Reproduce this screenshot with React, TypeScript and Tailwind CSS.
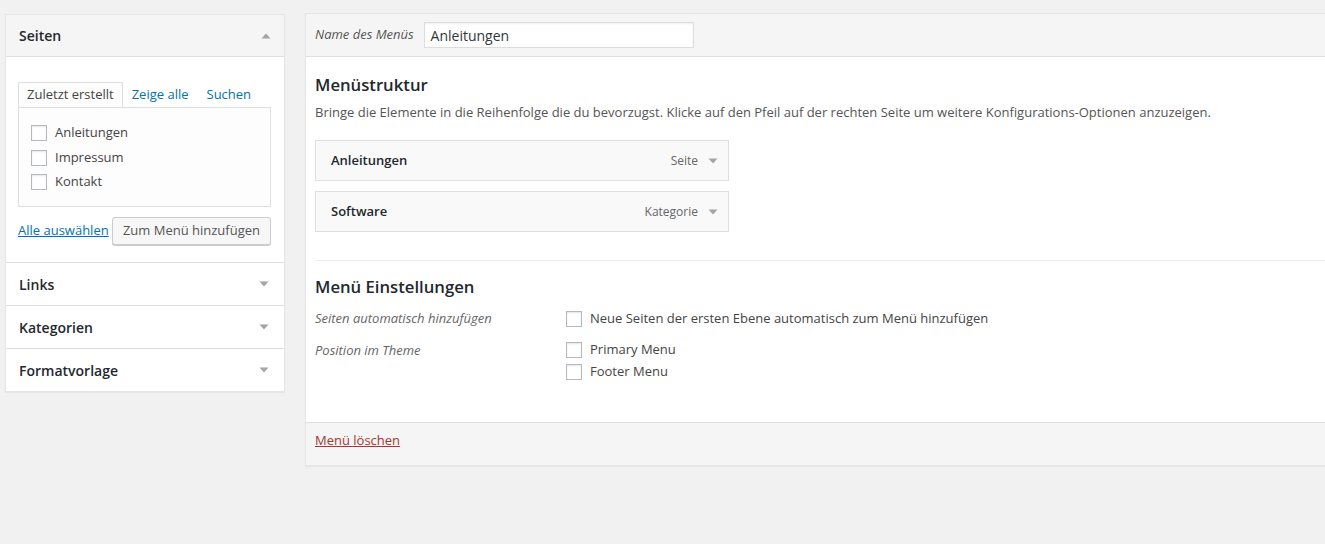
import React from "react";

const Down = () => (
  <svg width="10" height="6" viewBox="0 0 10 6" className="shrink-0">
    <path d="M0.5 0.5 L9.5 0.5 L5 5.5 Z" fill="#a0a5aa" />
  </svg>
);
const Up = () => (
  <svg width="10" height="6" viewBox="0 0 10 6" className="shrink-0">
    <path d="M0.5 5.5 L9.5 5.5 L5 0.5 Z" fill="#a0a5aa" />
  </svg>
);

const Box = () => (
  <span className="inline-block w-4 h-4 border border-[#b4b9be] bg-white shadow-[inset_0_1px_2px_rgba(0,0,0,0.1)] shrink-0" />
);

function Section({ title }: { title: string }) {
  return (
    <div className="h-[43px] border-t border-[#dfdfdf] flex items-center justify-between pl-[13px] pr-[15px] bg-white">
      <span className="text-[14px] font-semibold text-[#23282d]">{title}</span>
      <Down />
    </div>
  );
}

export default function App() {
  return (
    <div
      className="w-[1325px] h-[544px] overflow-hidden bg-[#f1f1f1] text-[13px] text-[#444]"
      style={{ fontFamily: '"Open Sans", "Noto Sans", sans-serif' }}
    >
      <div className="flex items-start pt-[13px]">
        {/* Left column */}
        <div className="ml-[5px] w-[280px] shrink-0 bg-white border border-[#e5e5e5] shadow-[0_1px_1px_rgba(0,0,0,0.04)] mt-px">
          <div className="h-[42px] bg-[#f5f5f5] border-b border-[#dfdfdf] flex items-center justify-between pl-[13px] pr-[13px]">
            <span className="text-[14px] font-semibold text-[#23282d]">Seiten</span>
            <Up />
          </div>
          <div className="pl-[12px] pr-[13px] pt-[26px] pb-[17px]">
            <div className="flex items-end h-[24px]">
              <div className="h-[25px] px-[8px] border border-[#dfdfdf] border-b-0 bg-[#fdfdfd] flex items-center text-[#444] relative z-10">
                Zuletzt erstellt
              </div>
              <span className="ml-[9px] h-[24px] flex items-center text-[#0073aa]">Zeige alle</span>
              <span className="ml-[18px] h-[24px] flex items-center text-[#0073aa]">Suchen</span>
            </div>
            <div className="h-[100px] border border-[#dfdfdf] bg-[#fdfdfd] pl-[12px] pt-[17px]">
              <div className="flex flex-col gap-[8.5px]">
                {["Anleitungen", "Impressum", "Kontakt"].map((t) => (
                  <label key={t} className="flex items-center gap-[8px] h-[16px]">
                    <Box />
                    <span>{t}</span>
                  </label>
                ))}
              </div>
            </div>
            <div className="flex items-center justify-between mt-[10px]">
              <span className="text-[#0073aa] underline">Alle auswählen</span>
              <button className="h-[28px] px-[10px] border border-[#ccc] bg-[#f7f7f7] rounded-[3px] shadow-[0_1px_0_#ccc] text-[#555] text-[13px]">
                Zum Menü hinzufügen
              </button>
            </div>
          </div>
          <Section title="Links" />
          <Section title="Kategorien" />
          <Section title="Formatvorlage" />
        </div>

        {/* Right panel */}
        <div className="ml-[20px] flex-1 bg-white border border-r-0 border-[#e5e5e5] shadow-[0_1px_1px_rgba(0,0,0,0.04)]">
          <div className="h-[43px] bg-[#f5f5f5] border-b border-[#dfdfdf] flex items-center pl-[9px]">
            <span className="italic text-[#555]">Name des Menüs</span>
            <div className="ml-[10px] w-[270px] h-[26px] border border-[#ddd] bg-white shadow-[inset_0_1px_2px_rgba(0,0,0,0.07)] flex items-center pl-[6px] text-[14px] text-[#32373c]">
              Anleitungen
            </div>
          </div>
          <div className="pl-[9px]">
            <div className="pt-[16px] text-[16.7px] font-semibold text-[#23282d] leading-[24px]">Menüstruktur</div>
            <div className="mt-[5px] leading-[20px] text-[#555]">
              Bringe die Elemente in die Reihenfolge die du bevorzugst. Klicke auf den Pfeil auf der rechten Seite um weitere Konfigurations-Optionen anzuzeigen.
            </div>
            <div className="mt-[18px] flex flex-col gap-[10px] w-[414px]">
              {[
                ["Anleitungen", "Seite"],
                ["Software", "Kategorie"],
              ].map(([t, k]) => (
                <div key={t} className="h-[41px] border border-[#dfdfdf] bg-[#f9f9f9] flex items-center pl-[15px] pr-[10px]">
                  <span className="font-semibold text-[#23282d] flex-1">{t}</span>
                  <span className="text-[12px] text-[#666]">{k}</span>
                  <span className="ml-[10px]"><Down /></span>
                </div>
              ))}
            </div>
            <div className="mt-[28px] border-t border-[#eee]" />
            <div className="pt-[14px] text-[16.7px] font-semibold text-[#23282d] leading-[24px]">Menü Einstellungen</div>
            <div className="mt-[10px] flex">
              <div className="w-[251px] italic text-[#666] leading-[18px]">Seiten automatisch hinzufügen</div>
              <label className="flex items-center gap-[8px] mt-[2px] h-[16px]">
                <Box />
                <span>Neue Seiten der ersten Ebene automatisch zum Menü hinzufügen</span>
              </label>
            </div>
            <div className="mt-[14px] flex pb-[42px]">
              <div className="w-[251px] italic text-[#666] leading-[18px]">Position im Theme</div>
              <div className="flex flex-col gap-[6px] mt-[1px]">
                <label className="flex items-center gap-[8px] h-[16px]">
                  <Box />
                  <span>Primary Menu</span>
                </label>
                <label className="flex items-center gap-[8px] h-[16px]">
                  <Box />
                  <span>Footer Menu</span>
                </label>
              </div>
            </div>
          </div>
          <div className="h-[43px] bg-[#f5f5f5] border-t border-[#dfdfdf] flex items-start pt-[8px] pl-[9px]">
            <span className="text-[#a33] underline">Menü löschen</span>
          </div>
        </div>
      </div>
    </div>
  );
}
